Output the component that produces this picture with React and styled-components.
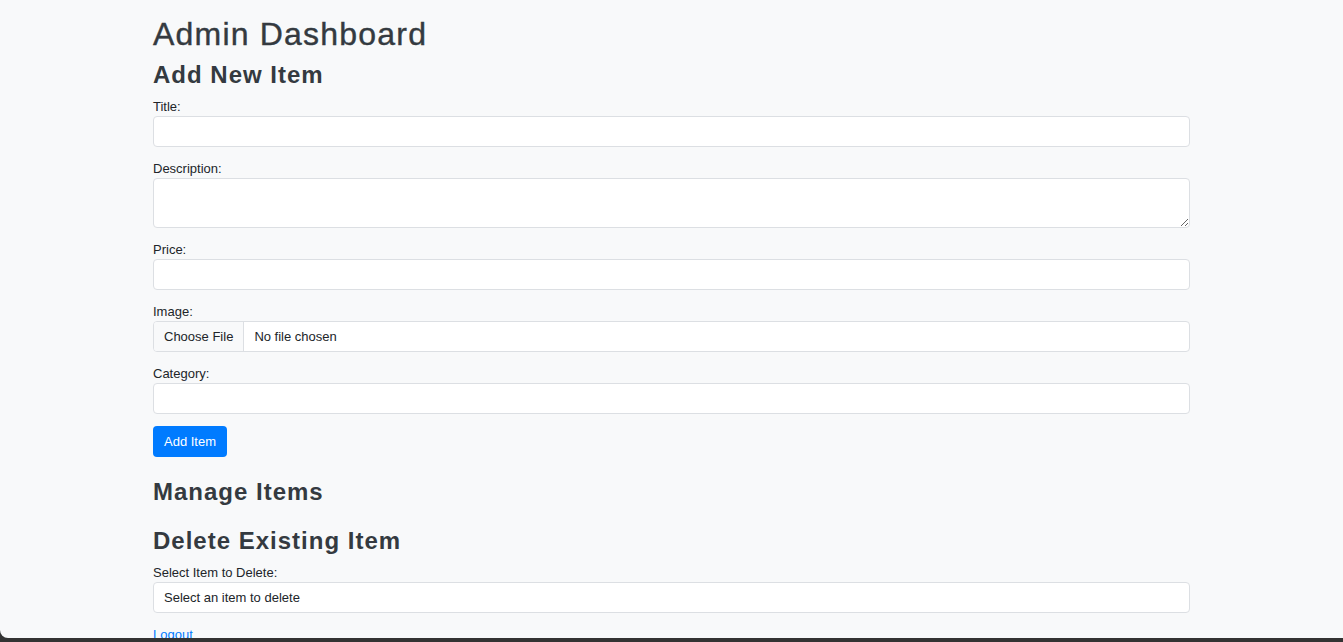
import React from 'react';
import styled, { createGlobalStyle } from 'styled-components';

const GlobalStyle = createGlobalStyle`
  html, body {
    margin: 0;
    padding: 0;
    background: #333333;
    font-family: "Liberation Sans", Arial, sans-serif;
  }
  * {
    box-sizing: border-box;
  }
`;

const Frame = styled.div`
  height: 638px;
  background: #f8f9fa;
  border-bottom-left-radius: 8px;
  overflow: hidden;
`;

const Container = styled.div`
  width: 1037px;
  margin: 0 auto;
  padding-top: 15px;
`;

const Title = styled.h1`
  margin: 0 0 8px;
  font-size: 32px;
  line-height: 1.2;
  font-weight: 400;
  letter-spacing: 1.2px;
  color: #343a40;
  -webkit-text-stroke: 0.4px #343a40;
`;

const SectionTitle = styled.h2`
  margin: ${({ $top = 0 }) => $top}px 0 7px;
  font-size: 24px;
  line-height: 1.2;
  font-weight: 700;
  letter-spacing: 1px;
  color: #343a40;
`;

const Group = styled.div`
  margin-bottom: 12px;
`;

const Label = styled.label`
  display: block;
  font-size: 13px;
  line-height: 19px;
  color: #212529;
`;

const fieldBase = `
  display: block;
  width: 100%;
  margin: 0;
  background: #fff;
  border: 1px solid #dcdfe3;
  border-radius: 4px;
  font-family: "Liberation Sans", Arial, sans-serif;
  font-size: 13px;
  color: #212529;
  outline: none;
`;

const Input = styled.input`
  ${fieldBase}
  height: 31px;
  padding: 0 10px;
`;

const TextArea = styled.textarea`
  ${fieldBase}
  height: 50px;
  padding: 6px 10px;
  resize: vertical;
`;

const FileField = styled.div`
  ${fieldBase}
  display: flex;
  align-items: stretch;
  height: 31px;
  overflow: hidden;
`;

const FileButton = styled.span`
  display: flex;
  align-items: center;
  padding: 0 10px;
  background: #f8f9fa;
  border-right: 1px solid #dcdfe3;
  color: #212529;
`;

const FileName = styled.span`
  display: flex;
  align-items: center;
  padding: 0 10px;
`;

const Select = styled.select`
  ${fieldBase}
  height: 31px;
  padding: 0 10px;
  appearance: none;
  -webkit-appearance: none;
`;

const Button = styled.button`
  display: inline-block;
  height: 31px;
  padding: 0 11px;
  margin: 0;
  background: #007bff;
  color: #fff;
  border: none;
  border-radius: 4px;
  font-family: "Liberation Sans", Arial, sans-serif;
  font-size: 13px;
  cursor: pointer;
`;

const LinkRow = styled.div`
  font-size: 13px;
  line-height: 19px;
`;

const Link = styled.a`
  color: #007bff;
  text-decoration: underline;
`;

const fields = [
  { id: 'title', label: 'Title:' },
  { id: 'description', label: 'Description:', multiline: true },
  { id: 'price', label: 'Price:' },
  { id: 'image', label: 'Image:', file: true },
  { id: 'category', label: 'Category:' },
];

export default function App () {
  return (
    <>
      <GlobalStyle />
      <Frame>
        <Container>
          <Title>Admin Dashboard</Title>
          <SectionTitle>Add New Item</SectionTitle>
          <form onSubmit={e => e.preventDefault()}>
            {fields.map(field => (
              <Group key={field.id}>
                <Label htmlFor={field.id}>{field.label}</Label>
                {field.multiline && <TextArea id={field.id} />}
                {field.file && (
                  <FileField>
                    <FileButton>Choose File</FileButton>
                    <FileName>No file chosen</FileName>
                  </FileField>
                )}
                {!field.multiline && !field.file && <Input id={field.id} type="text" />}
              </Group>
            ))}
            <Button type="submit">Add Item</Button>
          </form>

          <SectionTitle $top={21}>Manage Items</SectionTitle>

          <SectionTitle $top={20}>Delete Existing Item</SectionTitle>
          <Group>
            <Label htmlFor="delete">Select Item to Delete:</Label>
            <Select id="delete" defaultValue="">
              <option value="">Select an item to delete</option>
            </Select>
          </Group>
          <LinkRow>
            <Link href="#">Logout</Link>
          </LinkRow>
        </Container>
      </Frame>
    </>
  );
}
